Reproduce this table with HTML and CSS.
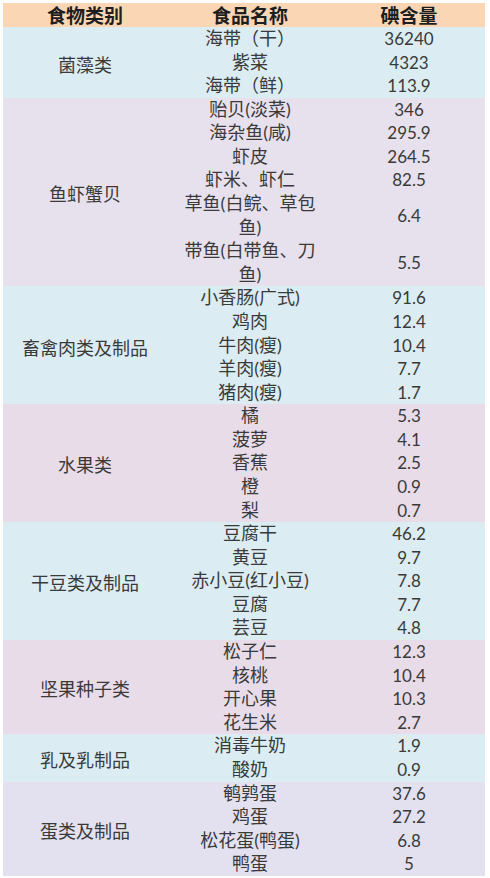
FILE: index.html
```html
<!DOCTYPE html>
<html lang="zh">
<head>
<meta charset="utf-8">
<title>食物碘含量</title>
<link rel="stylesheet" href="styles.css">
</head>
<body>
<table class="iodine">
  <colgroup>
    <col class="c1"><col class="c2"><col class="c3">
  </colgroup>
  <thead>
    <tr class="head"><th>食物类别</th><th>食品名称</th><th>碘含量</th></tr>
  </thead>
  <tbody class="g-blue">
    <tr><td class="cat" rowspan="3">菌藻类</td><td>海带（干）</td><td class="num">36240</td></tr>
    <tr><td>紫菜</td><td class="num">4323</td></tr>
    <tr><td>海带（鲜）</td><td class="num">113.9</td></tr>
  </tbody>
  <tbody class="g-lilac">
    <tr><td class="cat" rowspan="6">鱼虾蟹贝</td><td>贻贝(淡菜)</td><td class="num">346</td></tr>
    <tr><td>海杂鱼(咸)</td><td class="num">295.9</td></tr>
    <tr><td>虾皮</td><td class="num">264.5</td></tr>
    <tr><td>虾米、虾仁</td><td class="num">82.5</td></tr>
    <tr><td>草鱼(白鲩、草包<br>鱼)</td><td class="num">6.4</td></tr>
    <tr><td>带鱼(白带鱼、刀<br>鱼)</td><td class="num">5.5</td></tr>
  </tbody>
  <tbody class="g-blue">
    <tr><td class="cat" rowspan="5">畜禽肉类及制品</td><td>小香肠(广式)</td><td class="num">91.6</td></tr>
    <tr><td>鸡肉</td><td class="num">12.4</td></tr>
    <tr><td>牛肉(瘦)</td><td class="num">10.4</td></tr>
    <tr><td>羊肉(瘦)</td><td class="num">7.7</td></tr>
    <tr><td>猪肉(瘦)</td><td class="num">1.7</td></tr>
  </tbody>
  <tbody class="g-pink">
    <tr><td class="cat" rowspan="5">水果类</td><td>橘</td><td class="num">5.3</td></tr>
    <tr><td>菠萝</td><td class="num">4.1</td></tr>
    <tr><td>香蕉</td><td class="num">2.5</td></tr>
    <tr><td>橙</td><td class="num">0.9</td></tr>
    <tr><td>梨</td><td class="num">0.7</td></tr>
  </tbody>
  <tbody class="g-blue">
    <tr><td class="cat" rowspan="5">干豆类及制品</td><td>豆腐干</td><td class="num">46.2</td></tr>
    <tr><td>黄豆</td><td class="num">9.7</td></tr>
    <tr><td>赤小豆(红小豆)</td><td class="num">7.8</td></tr>
    <tr><td>豆腐</td><td class="num">7.7</td></tr>
    <tr><td>芸豆</td><td class="num">4.8</td></tr>
  </tbody>
  <tbody class="g-pink">
    <tr><td class="cat" rowspan="4">坚果种子类</td><td>松子仁</td><td class="num">12.3</td></tr>
    <tr><td>核桃</td><td class="num">10.4</td></tr>
    <tr><td>开心果</td><td class="num">10.3</td></tr>
    <tr><td>花生米</td><td class="num">2.7</td></tr>
  </tbody>
  <tbody class="g-blue">
    <tr><td class="cat" rowspan="2">乳及乳制品</td><td>消毒牛奶</td><td class="num">1.9</td></tr>
    <tr><td>酸奶</td><td class="num">0.9</td></tr>
  </tbody>
  <tbody class="g-lav">
    <tr><td class="cat" rowspan="4">蛋类及制品</td><td>鹌鹑蛋</td><td class="num">37.6</td></tr>
    <tr><td>鸡蛋</td><td class="num">27.2</td></tr>
    <tr><td>松花蛋(鸭蛋)</td><td class="num">6.8</td></tr>
    <tr><td>鸭蛋</td><td class="num">5</td></tr>
  </tbody>
</table>
</body>
</html>
```
FILE: styles.css
```css
html, body {
  margin: 0;
  padding: 0;
  background: #ffffff;
}

.iodine {
  margin: 3px 0 0 3px;
  width: 482px;
  border-collapse: collapse;
  border-spacing: 0;
  table-layout: fixed;
  font-family: Lato, "Noto Sans CJK SC", sans-serif;
  color: #3a3a3a;
}

.c1 { width: 164px; }
.c2 { width: 166px; }
.c3 { width: 152px; }

.iodine th,
.iodine td {
  padding: 0;
  text-align: center;
  vertical-align: middle;
  white-space: nowrap;
}

.head th {
  height: 24px;
  line-height: 24px;
  background: #fbd6b5;
  font-family: "Noto Sans CJK SC", sans-serif;
  font-weight: 700;
  font-size: 19px;
  color: #1e1e1e;
}

.iodine td {
  font-size: 18px;
  line-height: 23.58px;
  height: 23.58px;
}

.iodine td.cat {
  font-family: "Noto Sans CJK SC", sans-serif;
  padding-top: 4px;
}

.iodine td.num {
  font-size: 17px;
}

.g-blue td { background: #dbedf2; }
.g-lilac td { background: #e7e0ed; }
.g-pink td { background: #e9dce9; }
.g-lav td { background: #e3e1f0; }
```
